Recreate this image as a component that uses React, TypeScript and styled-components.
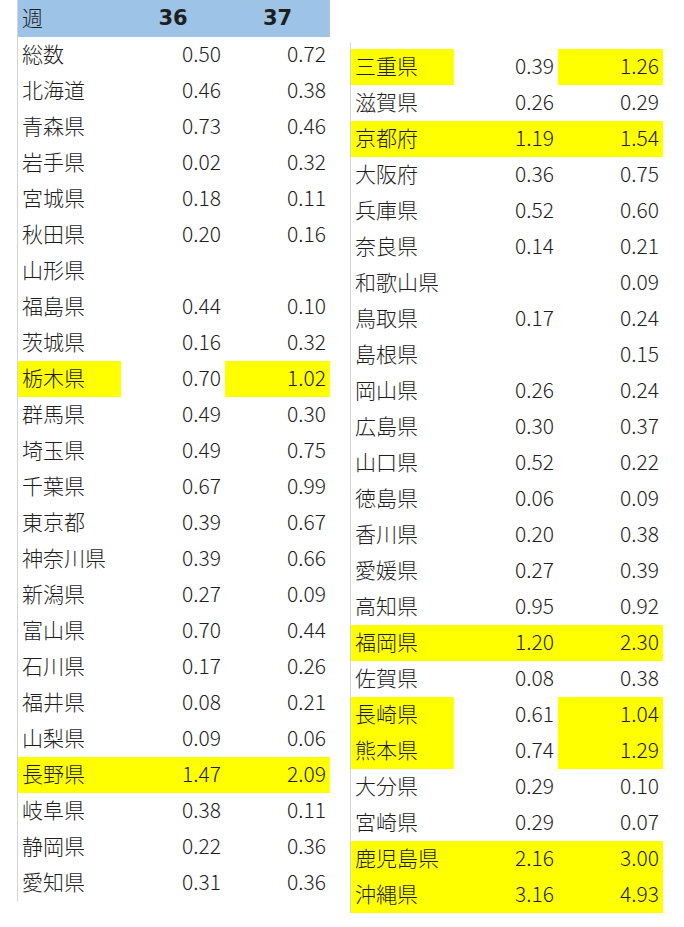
import React from "react";
import styled, { createGlobalStyle } from "styled-components";

const Global = createGlobalStyle`
  html, body { margin: 0; padding: 0; background: #ffffff; }
  body { font-family: "Noto Sans CJK JP", "Noto Sans", sans-serif; }
`;

type Row = { name: string; a: string; b: string; hl: "" | "all" | "nb" };

const left: Row[] = [
  { name: "総数", a: "0.50", b: "0.72", hl: "" },
  { name: "北海道", a: "0.46", b: "0.38", hl: "" },
  { name: "青森県", a: "0.73", b: "0.46", hl: "" },
  { name: "岩手県", a: "0.02", b: "0.32", hl: "" },
  { name: "宮城県", a: "0.18", b: "0.11", hl: "" },
  { name: "秋田県", a: "0.20", b: "0.16", hl: "" },
  { name: "山形県", a: "", b: "", hl: "" },
  { name: "福島県", a: "0.44", b: "0.10", hl: "" },
  { name: "茨城県", a: "0.16", b: "0.32", hl: "" },
  { name: "栃木県", a: "0.70", b: "1.02", hl: "nb" },
  { name: "群馬県", a: "0.49", b: "0.30", hl: "" },
  { name: "埼玉県", a: "0.49", b: "0.75", hl: "" },
  { name: "千葉県", a: "0.67", b: "0.99", hl: "" },
  { name: "東京都", a: "0.39", b: "0.67", hl: "" },
  { name: "神奈川県", a: "0.39", b: "0.66", hl: "" },
  { name: "新潟県", a: "0.27", b: "0.09", hl: "" },
  { name: "富山県", a: "0.70", b: "0.44", hl: "" },
  { name: "石川県", a: "0.17", b: "0.26", hl: "" },
  { name: "福井県", a: "0.08", b: "0.21", hl: "" },
  { name: "山梨県", a: "0.09", b: "0.06", hl: "" },
  { name: "長野県", a: "1.47", b: "2.09", hl: "all" },
  { name: "岐阜県", a: "0.38", b: "0.11", hl: "" },
  { name: "静岡県", a: "0.22", b: "0.36", hl: "" },
  { name: "愛知県", a: "0.31", b: "0.36", hl: "" },
];

const right: Row[] = [
  { name: "三重県", a: "0.39", b: "1.26", hl: "nb" },
  { name: "滋賀県", a: "0.26", b: "0.29", hl: "" },
  { name: "京都府", a: "1.19", b: "1.54", hl: "all" },
  { name: "大阪府", a: "0.36", b: "0.75", hl: "" },
  { name: "兵庫県", a: "0.52", b: "0.60", hl: "" },
  { name: "奈良県", a: "0.14", b: "0.21", hl: "" },
  { name: "和歌山県", a: "", b: "0.09", hl: "" },
  { name: "鳥取県", a: "0.17", b: "0.24", hl: "" },
  { name: "島根県", a: "", b: "0.15", hl: "" },
  { name: "岡山県", a: "0.26", b: "0.24", hl: "" },
  { name: "広島県", a: "0.30", b: "0.37", hl: "" },
  { name: "山口県", a: "0.52", b: "0.22", hl: "" },
  { name: "徳島県", a: "0.06", b: "0.09", hl: "" },
  { name: "香川県", a: "0.20", b: "0.38", hl: "" },
  { name: "愛媛県", a: "0.27", b: "0.39", hl: "" },
  { name: "高知県", a: "0.95", b: "0.92", hl: "" },
  { name: "福岡県", a: "1.20", b: "2.30", hl: "all" },
  { name: "佐賀県", a: "0.08", b: "0.38", hl: "" },
  { name: "長崎県", a: "0.61", b: "1.04", hl: "nb" },
  { name: "熊本県", a: "0.74", b: "1.29", hl: "nb" },
  { name: "大分県", a: "0.29", b: "0.10", hl: "" },
  { name: "宮崎県", a: "0.29", b: "0.07", hl: "" },
  { name: "鹿児島県", a: "2.16", b: "3.00", hl: "all" },
  { name: "沖縄県", a: "3.16", b: "4.93", hl: "all" },
];

const Page = styled.div`
  display: flex;
  align-items: flex-start;
  gap: 20px;
  padding-left: 17px;
`;

const Panel = styled.div<{ $top: number; $padTop: number }>`
  margin-top: ${(p) => p.$top}px;
  padding-top: ${(p) => p.$padTop}px;
  border-left: 1px solid #d4d4d4;
  display: grid;
  grid-template-columns: 103px 104px 105px;
`;

const HeadCell = styled.div<{ $center?: boolean; $last?: boolean }>`
  height: 37px;
  padding-bottom: ${(p) => (p.$center ? 1 : 3)}px;
  box-sizing: border-box;
  background: #9dc3e6;
  display: flex;
  align-items: center;
  justify-content: ${(p) => (p.$center ? "center" : "flex-start")};
  padding-left: ${(p) => (p.$center ? 0 : 4)}px;
  font-family: ${(p) => (p.$center ? '"DejaVu Sans", sans-serif' : '"Noto Sans CJK JP", sans-serif')};
  font-weight: ${(p) => (p.$center ? 700 : 300)};
  font-size: 21px;
  color: #1e1e1e;
  box-shadow: ${(p) => (p.$last ? "inset -1px 0 0 #b8c6d4" : "none")};
`;

const Cell = styled.div<{ $hl: boolean; $num?: boolean }>`
  height: 36px;
  box-sizing: border-box;
  padding: 0 4px 3px;
  display: flex;
  align-items: center;
  justify-content: ${(p) => (p.$num ? "flex-end" : "flex-start")};
  background: ${(p) => (p.$hl ? "#ffff00" : "transparent")};
  font-family: "Noto Sans CJK JP", "Noto Sans", sans-serif;
  font-weight: 300;
  font-size: 21px;
  line-height: 1;
  color: #1e1e1e;
  white-space: nowrap;
`;

const Rows: React.FC<{ rows: Row[] }> = ({ rows }) => (
  <>
    {rows.map((r) => (
      <React.Fragment key={r.name}>
        <Cell $hl={r.hl !== ""}>{r.name}</Cell>
        <Cell $num $hl={r.hl === "all"}>{r.a}</Cell>
        <Cell $num $hl={r.hl !== ""}>{r.b}</Cell>
      </React.Fragment>
    ))}
  </>
);

export default function App() {
  return (
    <>
      <Global />
      <Page>
        <Panel $top={0} $padTop={0}>
          <HeadCell>週</HeadCell>
          <HeadCell $center>36</HeadCell>
          <HeadCell $center $last>37</HeadCell>
          <Rows rows={left} />
        </Panel>
        <Panel $top={43} $padTop={6}>
          <Rows rows={right} />
        </Panel>
      </Page>
    </>
  );
}
